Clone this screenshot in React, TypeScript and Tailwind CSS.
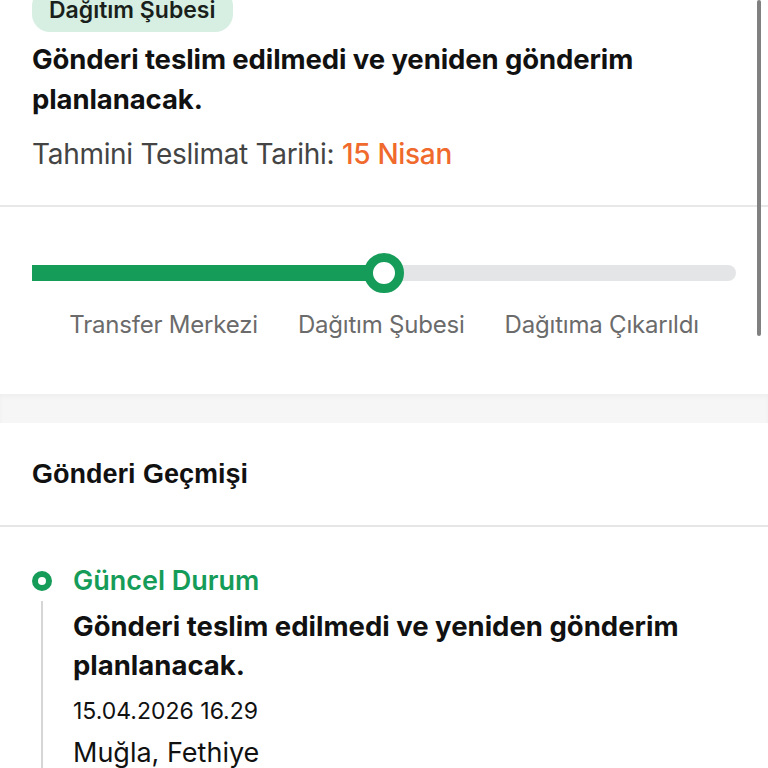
import { useMemo } from "react";

const steps = ["Transfer Merkezi", "Dağıtım Şubesi", "Dağıtıma Çıkarıldı"];

function ProgressTrack({ percent }: { percent: number }) {
    return (
        <div className="relative mx-8 h-4 rounded-full bg-[#e4e5e7]">
            <div className="h-4 bg-[#169c59]" style={{ width: `${percent}%` }} />
            <div
                className="absolute top-1/2 h-10 w-10 -translate-x-1/2 -translate-y-1/2 rounded-full border-[9px] border-[#169c59] bg-white"
                style={{ left: `${percent}%` }}
            />
        </div>
    );
}

export default function App() {
    const percent = useMemo(() => (352 / 704) * 100, []);

    return (
        <div
            className="relative h-[768px] w-[768px] overflow-hidden bg-white text-[#111]"
            style={{ fontFamily: "Inter, 'Noto Sans', sans-serif" }}
        >
            {/* status card */}
            <section className="px-8">
                <div className="-mt-3 inline-flex h-11 items-center rounded-[18px] bg-[#d6efe2] px-[17px]">
                    <span className="text-[23px] font-semibold text-[#1a1f1c]">Dağıtım Şubesi</span>
                </div>
                <h2 className="mt-[7px] pr-14 text-[27.5px] font-bold leading-[40px] tracking-[-0.1px]">
                    Gönderi teslim edilmedi ve yeniden gönderim planlanacak.
                </h2>
                <p className="mt-[18px] text-[28px] leading-[34px] tracking-[-0.3px] text-[#444]">
                    Tahmini Teslimat Tarihi: <span className="font-medium text-[#ef6a2c]">15 Nisan</span>
                </p>
            </section>
            <div className="mt-[34px] h-[2px] bg-[#e8e8e8]" />

            <section className="pt-[58px]">
                <ProgressTrack percent={percent} />
                <div className="mt-[28px] flex justify-center gap-10 text-[24px] leading-[32px] tracking-[-0.2px] text-[#6b6b6b]">
                    {steps.map((s) => (
                        <span key={s}>{s}</span>
                    ))}
                </div>
            </section>

            <div className="mt-[53px] h-[29px] bg-[#f6f6f6] shadow-[inset_0_3px_4px_rgba(0,0,0,0.03)]" />

            {/* history */}
            <section>
                <h3
                    className="flex h-[102px] items-center px-8 text-[27px] font-bold"
                    style={{ fontFamily: "'Liberation Sans', sans-serif" }}
                >
                    Gönderi Geçmişi
                </h3>
                <div className="h-[2px] bg-[#e6e6e6]" />
                <div className="relative px-8 pt-[37px]">
                    <div className="absolute left-[41px] top-[74px] h-[300px] w-[2px] bg-[#d6d6d6]" />
                    <div className="flex items-center gap-[21px]">
                        <span className="h-5 w-5 rounded-full border-[6px] border-[#169c59]" />
                        <span className="text-[27px] font-semibold leading-[34px] text-[#169c59]">Güncel Durum</span>
                    </div>
                    <div className="pl-[41px]">
                        <p className="mt-[9px] pr-10 text-[27.5px] font-bold leading-[39px]">
                            Gönderi teslim edilmedi ve yeniden gönderim planlanacak.
                        </p>
                        <p className="mt-[11px] text-[23px] leading-[30px]">15.04.2026 16.29</p>
                        <p className="mt-[10px] text-[27px] leading-[34px]">Muğla, Fethiye</p>
                    </div>
                </div>
            </section>

            {/* scroll indicator */}
            <div className="absolute right-[7px] top-0 h-[336px] w-[4px] rounded-full bg-[#808080]" />
        </div>
    );
}
